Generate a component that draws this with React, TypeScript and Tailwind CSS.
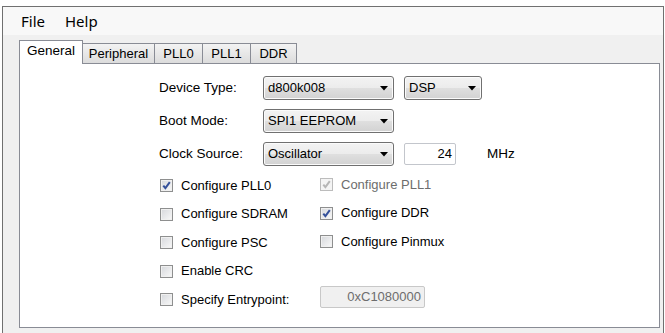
import clsx from "clsx";

const FONT = "font-['Liberation_Sans',Arial,sans-serif]";

function Arrow() {
  return (
    <svg width="8" height="5" viewBox="0 0 8 5" className="shrink-0">
      <polygon points="0,0 8,0 4,4.5" fill="#000" />
    </svg>
  );
}

function Combo({ value, width }: { value: string; width: string }) {
  return (
    <div
      className={clsx(
        width,
        "flex h-[24px] items-center justify-between rounded-[3px] border border-[#707070] bg-[linear-gradient(#f3f3f3,#ececec_48%,#dfdfdf_52%,#d2d2d2)] pl-[4px] pr-[5px] shadow-[inset_0_0_0_1px_#fbfbfb]"
      )}
    >
      <span className="text-[13px] leading-[16px] text-black">{value}</span>
      <Arrow />
    </div>
  );
}

function Check({ checked, disabled }: { checked?: boolean; disabled?: boolean }) {
  return (
    <span
      className={clsx(
        "flex h-[13px] w-[13px] shrink-0 items-center justify-center border",
        disabled
          ? "border-[#bcbcbc] bg-[#f4f4f4]"
          : "border-[#8e8f8f] bg-linear-to-br from-[#d6d8dc] to-[#f9f9f9] shadow-[inset_0_0_0_1px_#f0f0f0]"
      )}
    >
      {checked ? (
        <svg width="11" height="11" viewBox="0 0 11 11">
          <path
            d="M2.3 5.6 L4.4 8.2 L8.8 2.2"
            fill="none"
            stroke={disabled ? "#b6b6b6" : "#34509a"}
            strokeWidth="2"
          />
        </svg>
      ) : null}
    </span>
  );
}

function CheckItem({
  label,
  checked,
  disabled,
}: {
  label: string;
  checked?: boolean;
  disabled?: boolean;
}) {
  return (
    <div className="flex items-center gap-[8px]">
      <Check checked={checked} disabled={disabled} />
      <span className={clsx("text-[13px] leading-[16px]", disabled ? "text-[#6d6d6d]" : "text-black")}>
        {label}
      </span>
    </div>
  );
}

type Tab = { name: string; width: string };

const TABS: Tab[] = [
  { name: "Peripheral", width: "w-[73px]" },
  { name: "PLL0", width: "w-[49px]" },
  { name: "PLL1", width: "w-[49px]" },
  { name: "DDR", width: "w-[47px]" },
];

export default function App() {
  return (
    <div className={clsx("h-[333px] w-[665px] overflow-hidden bg-white pt-[6px] pl-[2px]", FONT)}>
      <div className="flex h-[327px] w-[662px] flex-col border-l border-r border-t border-[#707070] bg-[#f0f0f0]">
        {/* menu bar */}
        <div className="flex h-[28px] shrink-0 items-center bg-[#f8f8f8] pl-[18px] font-['Noto_Sans',sans-serif] text-[15px] text-black">
          <span className="w-[44px]">File</span>
          <span>Help</span>
        </div>

        {/* tab strip */}
        <div className="flex h-[28px] shrink-0 items-end pl-[16px] text-[13.5px] leading-[16px]">
          <div className="relative z-10 -mb-px flex h-[24px] w-[64px] justify-center border-l border-r border-t border-[#898c95] bg-white pt-[2px] text-black">
            General
          </div>
          {TABS.map((tab) => (
            <div
              key={tab.name}
              className={clsx(
                tab.width,
                "-ml-px flex h-[20px] justify-center border-l border-r border-t border-[#898c95] bg-linear-to-b from-[#f3f3f3] to-[#dcdcdc] pt-[2px] text-[13px] text-black"
              )}
            >
              {tab.name}
            </div>
          ))}
        </div>

        {/* panel */}
        <div className="ml-[16px] mr-[3px] h-[265px] shrink-0 border border-[#898c95] bg-white pl-[139px] pt-[12px] text-[13px] leading-[16px] text-black">
          <div className="flex h-[24px] items-center">
            <span className="w-[104px] text-[13.5px]">Device Type:</span>
            <Combo value="d800k008" width="w-[131px]" />
            <div className="ml-[10px]">
              <Combo value="DSP" width="w-[78px]" />
            </div>
          </div>
          <div className="mt-[9px] flex h-[24px] items-center">
            <span className="w-[104px] text-[13.5px]">Boot Mode:</span>
            <Combo value="SPI1 EEPROM" width="w-[131px]" />
          </div>
          <div className="mt-[9px] flex h-[24px] items-center">
            <span className="w-[104px] text-[13.5px]">Clock Source:</span>
            <Combo value="Oscillator" width="w-[131px]" />
            <div className="ml-[10px] flex h-[22px] w-[52px] items-center justify-end rounded-[2px] border border-[#c3c6cc] bg-white pr-[3px]">
              24
            </div>
            <span className="ml-[31px] text-[13.5px]">MHz</span>
          </div>

          <div className="ml-px mt-[5.5px] grid grid-cols-[160px_1fr] auto-rows-[28.5px] items-center">
            <CheckItem label="Configure PLL0" checked />
            <div className="-mt-[2px]">
              <CheckItem label="Configure PLL1" checked disabled />
            </div>
            <CheckItem label="Configure SDRAM" />
            <div className="-mt-[2px]">
              <CheckItem label="Configure DDR" checked />
            </div>
            <CheckItem label="Configure PSC" />
            <div className="-mt-[2px]">
              <CheckItem label="Configure Pinmux" />
            </div>
            <CheckItem label="Enable CRC" />
            <div />
            <CheckItem label="Specify Entrypoint:" />
            <div className="flex h-[22px] w-[105px] items-center justify-end self-start rounded-[2px] border border-[#c8c8c8] bg-[#f0f0f0] pr-[3px] text-[#6d6d6d]">
              0xC1080000
            </div>
          </div>
        </div>
      </div>
    </div>
  );
}
